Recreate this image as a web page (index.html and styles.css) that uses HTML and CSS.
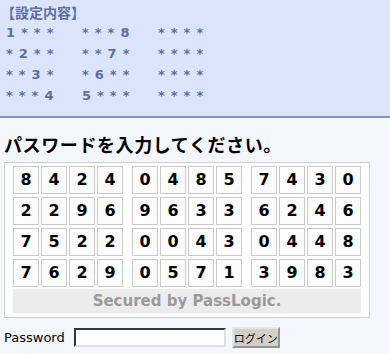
FILE: index.html
```html
<!DOCTYPE html>
<html lang="ja">
<head>
    <meta charset="UTF-8">
    <title>PassLogic</title>
    <link rel="stylesheet" href="styles.css">
</head>
<body>
    <div class="setting-panel">
        <div class="setting-title">【設定内容】</div>
        <div class="setting-row"><span>1***</span><span>***8</span><span>****</span></div>
        <div class="setting-row"><span>*2**</span><span>**7*</span><span>****</span></div>
        <div class="setting-row"><span>**3*</span><span>*6**</span><span>****</span></div>
        <div class="setting-row"><span>***4</span><span>5***</span><span>****</span></div>
    </div>

    <h1 class="prompt">パスワードを入力してください。</h1>

    <div class="matrix-box">
        <div class="matrix" id="matrix"></div>
        <div class="secured">Secured by PassLogic.</div>
    </div>

    <form class="login-form">
        <label for="password">Password</label>
        <input type="password" id="password">
        <button type="submit">ログイン</button>
    </form>

    <script>
        const rows = [
            '842404857430',
            '229696336246',
            '752200430448',
            '762905713983'
        ];
        const matrix = document.getElementById('matrix');
        rows.forEach(row => {
            const line = document.createElement('div');
            line.className = 'matrix-row';
            for (let g = 0; g < 3; g++) {
                const group = document.createElement('div');
                group.className = 'matrix-group';
                for (let i = 0; i < 4; i++) {
                    const cell = document.createElement('div');
                    cell.className = 'cell';
                    cell.textContent = row[g * 4 + i];
                    group.appendChild(cell);
                }
                line.appendChild(group);
            }
            matrix.appendChild(line);
        });
    </script>
</body>
</html>
```

FILE: styles.css
```css
* {
    margin: 0;
    padding: 0;
    box-sizing: border-box;
}

body {
    background: #f4f8fe;
    font-family: "DejaVu Sans", "Noto Sans CJK JP", sans-serif;
    color: #000;
}

.setting-panel {
    background: #dce4fc;
    border-bottom: 2px solid #8193c2;
    padding: 2px 4px 10px 4px;
    height: 118px;
    color: #5a6fa8;
}

.setting-title {
    font-family: "Noto Sans CJK JP", sans-serif;
    font-size: 14px;
    font-weight: bold;
    line-height: 20px;
    margin-left: -3px;
}

.setting-row {
    display: flex;
    font-size: 13px;
    font-weight: bold;
    line-height: 21px;
    padding-left: 2px;
}

.setting-row span {
    width: 76px;
    letter-spacing: 6px;
}

.prompt {
    font-family: "Noto Sans CJK JP", sans-serif;
    font-size: 18px;
    font-weight: 600;
    letter-spacing: 0.6px;
    line-height: 22px;
    margin: 15px 0 7px 4px;
}

.matrix-box {
    width: 366px;
    margin-left: 4px;
    background: #fff;
    border: 1px solid #cfcfcf;
    padding: 3px 8px 4px 8px;
}

.matrix {
    display: flex;
    flex-direction: column;
    gap: 3px;
}

.matrix-row {
    display: flex;
    gap: 9px;
}

.matrix-group {
    display: flex;
    gap: 2px;
}

.cell {
    width: 26px;
    height: 28px;
    border: 1px solid #cacaca;
    background: #fcfcfc;
    text-align: center;
    line-height: 26px;
    font-size: 16px;
    font-weight: bold;
}

.secured {
    margin-top: 2px;
    height: 24px;
    background: #ececec;
    color: #9a9a9a;
    font-size: 15px;
    font-weight: bold;
    text-align: center;
    line-height: 24px;
}

.login-form {
    display: flex;
    align-items: center;
    margin: 9px 0 0 4px;
    font-size: 13px;
}

.login-form label {
    margin-right: 9px;
}

.login-form input {
    width: 152px;
    height: 19px;
    border: 2px inset #8a8a8a;
    border-right-color: #e0e0e0;
    border-bottom-color: #e0e0e0;
    background: #fff;
}

.login-form button {
    margin-left: 6px;
    width: 48px;
    height: 21px;
    padding: 0;
    font-family: "Noto Sans CJK JP", sans-serif;
    font-size: 11px;
    white-space: nowrap;
    background: #d4d0c8;
    border: 2px outset #e8e6e0;
    color: #000;
}
```
